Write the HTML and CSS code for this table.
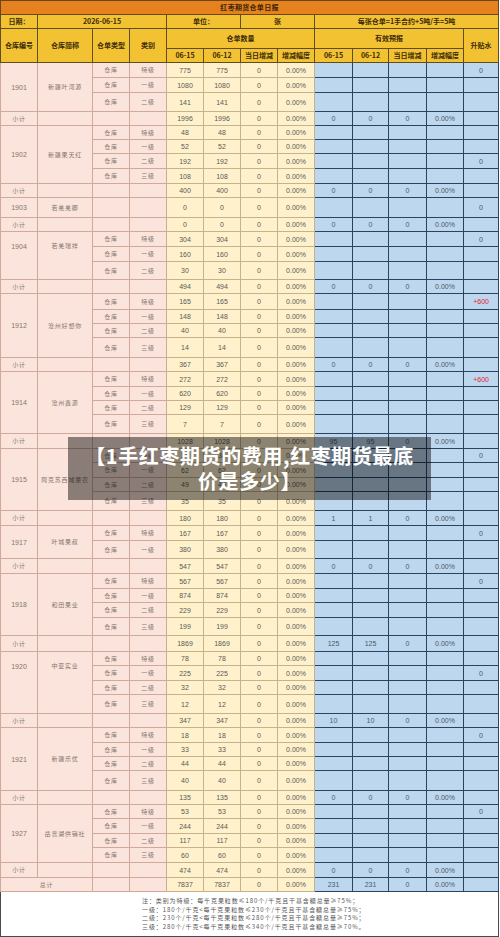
FILE: index.html
```html
<!DOCTYPE html>
<html lang="zh-CN">
<head>
<meta charset="utf-8">
<title>红枣期货仓单日报</title>
<link rel="stylesheet" href="styles.css">
</head>
<body>
<div class="page">
<table class="sheet">
<colgroup>
<col class="c37"><col class="c55"><col class="c37"><col class="c37"><col class="c37"><col class="c37"><col class="c37"><col class="c37"><col class="c38"><col class="c36"><col class="c38"><col class="c37"><col class="c35">
</colgroup>
<tr class="r14"><th colspan="13" class="title">红枣期货仓单日报</th></tr>
<tr class="r14"><th class="hd">日期：</th><th colspan="3" class="hd">2026-06-15</th><th colspan="2" class="hd">单位：</th><th colspan="2" class="hd">张</th><th colspan="5" class="hd">每张仓单=1手合约+5吨/手=5吨</th></tr>
<tr class="r20"><th rowspan="2" class="hd">仓库编号</th><th rowspan="2" class="hd">仓库简称</th><th rowspan="2" class="hd">仓单类型</th><th rowspan="2" class="hd">类别</th><th colspan="4" class="hd">仓单数量</th><th colspan="4" class="hd">有效预报</th><th rowspan="2" class="hd">升贴水</th></tr>
<tr class="r14"><th class="hd">06-15</th><th class="hd">06-12</th><th class="hd">当日增减</th><th class="hd">增减幅度</th><th class="hd">06-15</th><th class="hd">06-12</th><th class="hd">当日增减</th><th class="hd">增减幅度</th></tr>

<!-- 1901 -->
<tr class="r15"><td rowspan="3" class="p">1901</td><td rowspan="3" class="p cn">新疆叶河源</td><td class="p cn">仓库</td><td class="p cn">特级</td><td class="y">775</td><td class="y">775</td><td class="y">0</td><td class="y">0.00%</td><td class="b"></td><td class="b"></td><td class="b"></td><td class="b"></td><td class="b">0</td></tr>
<tr class="r15"><td class="p cn">仓库</td><td class="p cn">一级</td><td class="y">1080</td><td class="y">1080</td><td class="y">0</td><td class="y">0.00%</td><td class="b"></td><td class="b"></td><td class="b"></td><td class="b"></td><td class="b"></td></tr>
<tr class="r19"><td class="p cn">仓库</td><td class="p cn">二级</td><td class="y">141</td><td class="y">141</td><td class="y">0</td><td class="y">0.00%</td><td class="b"></td><td class="b"></td><td class="b"></td><td class="b"></td><td class="b"></td></tr>
<tr class="r14"><td class="p cn">小计</td><td class="p"></td><td class="p"></td><td class="p"></td><td class="y">1996</td><td class="y">1996</td><td class="y">0</td><td class="y">0.00%</td><td class="b">0</td><td class="b">0</td><td class="b">0</td><td class="b">0.00%</td><td class="b"></td></tr>

<!-- 1902 -->
<tr class="r14"><td rowspan="4" class="p">1902</td><td rowspan="4" class="p cn">新疆果天红</td><td class="p cn">仓库</td><td class="p cn">特级</td><td class="y">48</td><td class="y">48</td><td class="y">0</td><td class="y">0.00%</td><td class="b"></td><td class="b"></td><td class="b"></td><td class="b"></td><td class="b"></td></tr>
<tr class="r14"><td class="p cn">仓库</td><td class="p cn">一级</td><td class="y">52</td><td class="y">52</td><td class="y">0</td><td class="y">0.00%</td><td class="b"></td><td class="b"></td><td class="b"></td><td class="b"></td><td class="b"></td></tr>
<tr class="r15"><td class="p cn">仓库</td><td class="p cn">二级</td><td class="y">192</td><td class="y">192</td><td class="y">0</td><td class="y">0.00%</td><td class="b"></td><td class="b"></td><td class="b"></td><td class="b"></td><td class="b">0</td></tr>
<tr class="r15"><td class="p cn">仓库</td><td class="p cn">三级</td><td class="y">108</td><td class="y">108</td><td class="y">0</td><td class="y">0.00%</td><td class="b"></td><td class="b"></td><td class="b"></td><td class="b"></td><td class="b"></td></tr>
<tr class="r14"><td class="p cn">小计</td><td class="p"></td><td class="p"></td><td class="p"></td><td class="y">400</td><td class="y">400</td><td class="y">0</td><td class="y">0.00%</td><td class="b">0</td><td class="b">0</td><td class="b">0</td><td class="b">0.00%</td><td class="b"></td></tr>

<!-- 1903 -->
<tr class="r20"><td class="p">1903</td><td class="p cn">若羌羌卿</td><td class="p"></td><td class="p"></td><td class="y">0</td><td class="y">0</td><td class="y">0</td><td class="y">0.00%</td><td class="b"></td><td class="b"></td><td class="b"></td><td class="b"></td><td class="b">0</td></tr>
<tr class="r14"><td class="p cn">小计</td><td class="p"></td><td class="p"></td><td class="p"></td><td class="y">0</td><td class="y">0</td><td class="y">0</td><td class="y">0.00%</td><td class="b">0</td><td class="b">0</td><td class="b">0</td><td class="b">0.00%</td><td class="b"></td></tr>

<!-- 1904 -->
<tr class="r15"><td rowspan="3" class="p top">1904</td><td rowspan="3" class="p cn top">若羌瑞祥</td><td class="p cn">仓库</td><td class="p cn">特级</td><td class="y">304</td><td class="y">304</td><td class="y">0</td><td class="y">0.00%</td><td class="b"></td><td class="b"></td><td class="b"></td><td class="b"></td><td class="b">0</td></tr>
<tr class="r15"><td class="p cn">仓库</td><td class="p cn">一级</td><td class="y">160</td><td class="y">160</td><td class="y">0</td><td class="y">0.00%</td><td class="b"></td><td class="b"></td><td class="b"></td><td class="b"></td><td class="b"></td></tr>
<tr class="r18"><td class="p cn">仓库</td><td class="p cn">二级</td><td class="y">30</td><td class="y">30</td><td class="y">0</td><td class="y">0.00%</td><td class="b"></td><td class="b"></td><td class="b"></td><td class="b"></td><td class="b"></td></tr>
<tr class="r14"><td class="p cn">小计</td><td class="p"></td><td class="p"></td><td class="p"></td><td class="y">494</td><td class="y">494</td><td class="y">0</td><td class="y">0.00%</td><td class="b">0</td><td class="b">0</td><td class="b">0</td><td class="b">0.00%</td><td class="b"></td></tr>

<!-- 1912 -->
<tr class="r16"><td rowspan="4" class="p">1912</td><td rowspan="4" class="p cn">沧州好想你</td><td class="p cn">仓库</td><td class="p cn">特级</td><td class="y">165</td><td class="y">165</td><td class="y">0</td><td class="y">0.00%</td><td class="b"></td><td class="b"></td><td class="b"></td><td class="b"></td><td class="b red">+600</td></tr>
<tr class="r14"><td class="p cn">仓库</td><td class="p cn">一级</td><td class="y">148</td><td class="y">148</td><td class="y">0</td><td class="y">0.00%</td><td class="b"></td><td class="b"></td><td class="b"></td><td class="b"></td><td class="b"></td></tr>
<tr class="r14"><td class="p cn">仓库</td><td class="p cn">二级</td><td class="y">40</td><td class="y">40</td><td class="y">0</td><td class="y">0.00%</td><td class="b"></td><td class="b"></td><td class="b"></td><td class="b"></td><td class="b"></td></tr>
<tr class="r20"><td class="p cn">仓库</td><td class="p cn">三级</td><td class="y">14</td><td class="y">14</td><td class="y">0</td><td class="y">0.00%</td><td class="b"></td><td class="b"></td><td class="b"></td><td class="b"></td><td class="b"></td></tr>
<tr class="r14"><td class="p cn">小计</td><td class="p"></td><td class="p"></td><td class="p"></td><td class="y">367</td><td class="y">367</td><td class="y">0</td><td class="y">0.00%</td><td class="b">0</td><td class="b">0</td><td class="b">0</td><td class="b">0.00%</td><td class="b"></td></tr>

<!-- 1914 -->
<tr class="r15"><td rowspan="4" class="p">1914</td><td rowspan="4" class="p cn">沧州鑫源</td><td class="p cn">仓库</td><td class="p cn">特级</td><td class="y">272</td><td class="y">272</td><td class="y">0</td><td class="y">0.00%</td><td class="b"></td><td class="b"></td><td class="b"></td><td class="b"></td><td class="b red">+600</td></tr>
<tr class="r14"><td class="p cn">仓库</td><td class="p cn">一级</td><td class="y">620</td><td class="y">620</td><td class="y">0</td><td class="y">0.00%</td><td class="b"></td><td class="b"></td><td class="b"></td><td class="b"></td><td class="b"></td></tr>
<tr class="r14"><td class="p cn">仓库</td><td class="p cn">二级</td><td class="y">129</td><td class="y">129</td><td class="y">0</td><td class="y">0.00%</td><td class="b"></td><td class="b"></td><td class="b"></td><td class="b"></td><td class="b"></td></tr>
<tr class="r19"><td class="p cn">仓库</td><td class="p cn">三级</td><td class="y">7</td><td class="y">7</td><td class="y">0</td><td class="y">0.00%</td><td class="b"></td><td class="b"></td><td class="b"></td><td class="b"></td><td class="b"></td></tr>
<tr class="r15"><td class="p cn">小计</td><td class="p"></td><td class="p"></td><td class="p"></td><td class="y">1028</td><td class="y">1028</td><td class="y">0</td><td class="y">0.00%</td><td class="b">95</td><td class="b">95</td><td class="b">0</td><td class="b">0.00%</td><td class="b"></td></tr>

<!-- 1915 -->
<tr class="r14"><td rowspan="4" class="p">1915</td><td rowspan="4" class="p cn">阿克苏西域果农</td><td class="p cn">仓库</td><td class="p cn">特级</td><td class="y">34</td><td class="y">34</td><td class="y">0</td><td class="y">0.00%</td><td class="b"></td><td class="b"></td><td class="b"></td><td class="b"></td><td class="b">0</td></tr>
<tr class="r15"><td class="p cn">仓库</td><td class="p cn">一级</td><td class="y">62</td><td class="y">62</td><td class="y">0</td><td class="y">0.00%</td><td class="b"></td><td class="b"></td><td class="b"></td><td class="b"></td><td class="b"></td></tr>
<tr class="r14"><td class="p cn">仓库</td><td class="p cn">二级</td><td class="y">49</td><td class="y">49</td><td class="y">0</td><td class="y">0.00%</td><td class="b"></td><td class="b"></td><td class="b"></td><td class="b"></td><td class="b"></td></tr>
<tr class="r19"><td class="p cn">仓库</td><td class="p cn">三级</td><td class="y">35</td><td class="y">35</td><td class="y">0</td><td class="y">0.00%</td><td class="b"></td><td class="b"></td><td class="b"></td><td class="b"></td><td class="b"></td></tr>
<tr class="r15"><td class="p cn">小计</td><td class="p"></td><td class="p"></td><td class="p"></td><td class="y">180</td><td class="y">180</td><td class="y">0</td><td class="y">0.00%</td><td class="b">1</td><td class="b">1</td><td class="b">0</td><td class="b">0.00%</td><td class="b"></td></tr>

<!-- 1917 -->
<tr class="r15"><td rowspan="2" class="p">1917</td><td rowspan="2" class="p cn">叶城果叔</td><td class="p cn">仓库</td><td class="p cn">特级</td><td class="y">167</td><td class="y">167</td><td class="y">0</td><td class="y">0.00%</td><td class="b"></td><td class="b"></td><td class="b"></td><td class="b"></td><td class="b">0</td></tr>
<tr class="r18"><td class="p cn">仓库</td><td class="p cn">一级</td><td class="y">380</td><td class="y">380</td><td class="y">0</td><td class="y">0.00%</td><td class="b"></td><td class="b"></td><td class="b"></td><td class="b"></td><td class="b"></td></tr>
<tr class="r15"><td class="p cn">小计</td><td class="p"></td><td class="p"></td><td class="p"></td><td class="y">547</td><td class="y">547</td><td class="y">0</td><td class="y">0.00%</td><td class="b">0</td><td class="b">0</td><td class="b">0</td><td class="b">0.00%</td><td class="b"></td></tr>

<!-- 1918 -->
<tr class="r15"><td rowspan="4" class="p">1918</td><td rowspan="4" class="p cn">和田果业</td><td class="p cn">仓库</td><td class="p cn">特级</td><td class="y">567</td><td class="y">567</td><td class="y">0</td><td class="y">0.00%</td><td class="b"></td><td class="b"></td><td class="b"></td><td class="b"></td><td class="b">0</td></tr>
<tr class="r14"><td class="p cn">仓库</td><td class="p cn">一级</td><td class="y">874</td><td class="y">874</td><td class="y">0</td><td class="y">0.00%</td><td class="b"></td><td class="b"></td><td class="b"></td><td class="b"></td><td class="b"></td></tr>
<tr class="r15"><td class="p cn">仓库</td><td class="p cn">二级</td><td class="y">229</td><td class="y">229</td><td class="y">0</td><td class="y">0.00%</td><td class="b"></td><td class="b"></td><td class="b"></td><td class="b"></td><td class="b"></td></tr>
<tr class="r18"><td class="p cn">仓库</td><td class="p cn">三级</td><td class="y">199</td><td class="y">199</td><td class="y">0</td><td class="y">0.00%</td><td class="b"></td><td class="b"></td><td class="b"></td><td class="b"></td><td class="b"></td></tr>
<tr class="r16"><td class="p cn">小计</td><td class="p"></td><td class="p"></td><td class="p"></td><td class="y">1869</td><td class="y">1869</td><td class="y">0</td><td class="y">0.00%</td><td class="b">125</td><td class="b">125</td><td class="b">0</td><td class="b">0.00%</td><td class="b"></td></tr>

<!-- 1920 -->
<tr class="r14"><td rowspan="4" class="p top">1920</td><td rowspan="4" class="p cn top">中亚实业</td><td class="p cn">仓库</td><td class="p cn">特级</td><td class="y">78</td><td class="y">78</td><td class="y">0</td><td class="y">0.00%</td><td class="b"></td><td class="b"></td><td class="b"></td><td class="b"></td><td class="b"></td></tr>
<tr class="r15"><td class="p cn">仓库</td><td class="p cn">一级</td><td class="y">225</td><td class="y">225</td><td class="y">0</td><td class="y">0.00%</td><td class="b"></td><td class="b"></td><td class="b"></td><td class="b"></td><td class="b">0</td></tr>
<tr class="r14"><td class="p cn">仓库</td><td class="p cn">二级</td><td class="y">32</td><td class="y">32</td><td class="y">0</td><td class="y">0.00%</td><td class="b"></td><td class="b"></td><td class="b"></td><td class="b"></td><td class="b"></td></tr>
<tr class="r19"><td class="p cn">仓库</td><td class="p cn">三级</td><td class="y">12</td><td class="y">12</td><td class="y">0</td><td class="y">0.00%</td><td class="b"></td><td class="b"></td><td class="b"></td><td class="b"></td><td class="b"></td></tr>
<tr class="r14"><td class="p cn">小计</td><td class="p"></td><td class="p"></td><td class="p"></td><td class="y">347</td><td class="y">347</td><td class="y">0</td><td class="y">0.00%</td><td class="b">10</td><td class="b">10</td><td class="b">0</td><td class="b">0.00%</td><td class="b"></td></tr>

<!-- 1921 -->
<tr class="r15"><td rowspan="4" class="p">1921</td><td rowspan="4" class="p cn">新疆乐优</td><td class="p cn">仓库</td><td class="p cn">特级</td><td class="y">18</td><td class="y">18</td><td class="y">0</td><td class="y">0.00%</td><td class="b"></td><td class="b"></td><td class="b"></td><td class="b"></td><td class="b">0</td></tr>
<tr class="r14"><td class="p cn">仓库</td><td class="p cn">一级</td><td class="y">33</td><td class="y">33</td><td class="y">0</td><td class="y">0.00%</td><td class="b"></td><td class="b"></td><td class="b"></td><td class="b"></td><td class="b"></td></tr>
<tr class="r14"><td class="p cn">仓库</td><td class="p cn">二级</td><td class="y">44</td><td class="y">44</td><td class="y">0</td><td class="y">0.00%</td><td class="b"></td><td class="b"></td><td class="b"></td><td class="b"></td><td class="b"></td></tr>
<tr class="r20"><td class="p cn">仓库</td><td class="p cn">三级</td><td class="y">40</td><td class="y">40</td><td class="y">0</td><td class="y">0.00%</td><td class="b"></td><td class="b"></td><td class="b"></td><td class="b"></td><td class="b"></td></tr>
<tr class="r14"><td class="p cn">小计</td><td class="p"></td><td class="p"></td><td class="p"></td><td class="y">135</td><td class="y">135</td><td class="y">0</td><td class="y">0.00%</td><td class="b">0</td><td class="b">0</td><td class="b">0</td><td class="b">0.00%</td><td class="b"></td></tr>

<!-- 1927 -->
<tr class="r14"><td rowspan="4" class="p">1927</td><td rowspan="4" class="p cn">岳普湖供销社</td><td class="p cn">仓库</td><td class="p cn">特级</td><td class="y">53</td><td class="y">53</td><td class="y">0</td><td class="y">0.00%</td><td class="b"></td><td class="b"></td><td class="b"></td><td class="b"></td><td class="b">0</td></tr>
<tr class="r15"><td class="p cn">仓库</td><td class="p cn">一级</td><td class="y">244</td><td class="y">244</td><td class="y">0</td><td class="y">0.00%</td><td class="b"></td><td class="b"></td><td class="b"></td><td class="b"></td><td class="b"></td></tr>
<tr class="r14"><td class="p cn">仓库</td><td class="p cn">二级</td><td class="y">117</td><td class="y">117</td><td class="y">0</td><td class="y">0.00%</td><td class="b"></td><td class="b"></td><td class="b"></td><td class="b"></td><td class="b"></td></tr>
<tr class="r15"><td class="p cn">仓库</td><td class="p cn">三级</td><td class="y">60</td><td class="y">60</td><td class="y">0</td><td class="y">0.00%</td><td class="b"></td><td class="b"></td><td class="b"></td><td class="b"></td><td class="b"></td></tr>
<tr class="r15"><td class="p cn">小计</td><td class="p"></td><td class="p"></td><td class="p"></td><td class="y">474</td><td class="y">474</td><td class="y">0</td><td class="y">0.00%</td><td class="b">0</td><td class="b">0</td><td class="b">0</td><td class="b">0.00%</td><td class="b"></td></tr>

<!-- 总计 -->
<tr class="r14"><td colspan="2" class="p cn">总计</td><td class="p"></td><td class="p"></td><td class="y">7837</td><td class="y">7837</td><td class="y">0</td><td class="y">0.00%</td><td class="b">231</td><td class="b">231</td><td class="b">0</td><td class="b">0.00%</td><td class="b"></td></tr>

<tr class="r45"><td colspan="13" class="note">
<div class="note-text">
<p>注：类别为特级：每千克果粒数≤180个/千克且干基含糖总量≥75%；</p>
<p>一级：180个/千克&lt;每千克果粒数≤230个/千克且干基含糖总量≥75%；</p>
<p>二级：230个/千克&lt;每千克果粒数≤280个/千克且干基含糖总量≥75%；</p>
<p>三级：280个/千克&lt;每千克果粒数≤340个/千克且干基含糖总量≥70%。</p>
</div>
</td></tr>
</table>

<div class="caption">【1手红枣期货的费用,红枣期货最底<br>价是多少】</div>
</div>
</body>
</html>
```
FILE: styles.css
```css
html, body {
  margin: 0;
  padding: 0;
  background: #ffffff;
}

.page {
  position: relative;
  width: 500px;
  height: 937px;
  overflow: hidden;
}

.sheet {
  border-collapse: collapse;
  table-layout: fixed;
  width: 499px;
  font-family: "Liberation Sans", "Noto Sans CJK SC", sans-serif;
  font-size: 7px;
  border: 1px solid #4a4a4a;
}

.c37 { width: 37px; }
.c55 { width: 55px; }
.c38 { width: 38px; }
.c36 { width: 36px; }
.c35 { width: 35px; }

.sheet th,
.sheet td {
  padding: 0;
  text-align: center;
  vertical-align: middle;
  line-height: 1;
  white-space: nowrap;
  overflow: hidden;
}

.r14 { height: 14px; }
.r15 { height: 15px; }
.r16 { height: 16px; }
.r18 { height: 18px; }
.r19 { height: 19px; }
.r20 { height: 20px; }
.r45 { height: 45px; }

.title {
  background: #e5811f;
  color: #3a2408;
  font-family: "Noto Sans CJK SC", sans-serif;
  font-weight: bold;
  font-size: 7px;
  letter-spacing: 0.3px;
  border: 1px solid #6a4618;
}

.hd {
  background: #f2c232;
  color: #3a2a08;
  font-family: "Noto Sans CJK SC", sans-serif;
  font-weight: bold;
  font-size: 7px;
  border: 1px solid #5f4d1e;
}

.p {
  background: #fbe4db;
  border: 1px solid #d0a99d;
  color: #857470;
}

.y {
  background: #fff1cc;
  border: 1px solid #c5b38e;
  color: #5c5a56;
}

.b {
  background: #bdd7ee;
  border: 1px solid #2c435d;
  color: #4c5a68;
}

.red {
  color: #e3262b;
}

.cn {
  font-family: "Noto Sans CJK SC", sans-serif;
  font-size: 6px;
  letter-spacing: 0.8px;
}

.sheet td.top {
  vertical-align: top;
  padding-top: 11px;
}

.sheet td.note {
  background: #ffffff;
  border: 1px solid #4a4a4a;
  text-align: left;
  vertical-align: top;
  padding: 5px 0 0 141px;
}

.note-text {
  font-family: "Noto Sans CJK SC", sans-serif;
  font-size: 6px;
  letter-spacing: 0.9px;
  line-height: 8.7px;
  color: #555555;
}

.note-text p {
  margin: 0;
}

.caption {
  position: absolute;
  left: 68px;
  top: 437px;
  width: 363px;
  height: 63px;
  box-sizing: border-box;
  padding-top: 6px;
  background: rgba(0, 0, 0, 0.45);
  color: #ffffff;
  font-family: "Noto Sans CJK SC", sans-serif;
  font-weight: bold;
  font-size: 20px;
  letter-spacing: 0.6px;
  line-height: 25px;
  text-align: center;
}
```
